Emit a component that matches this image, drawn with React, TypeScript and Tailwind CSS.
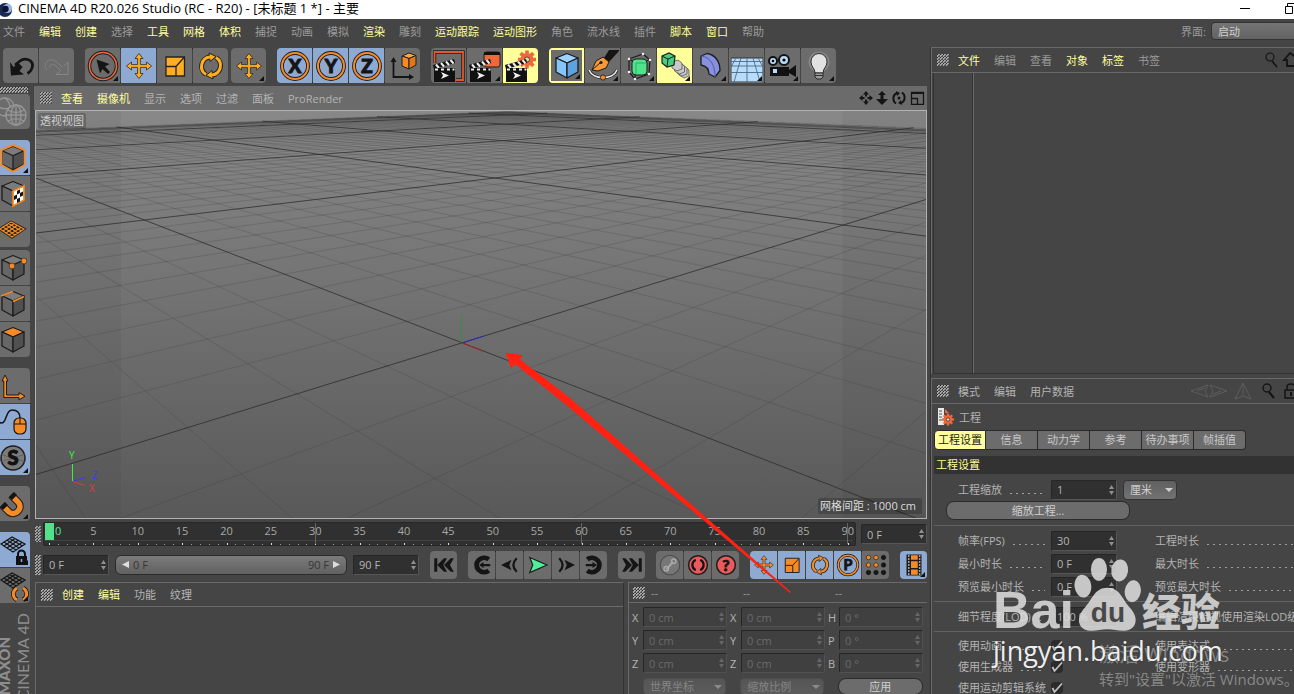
import React from "react";
import clsx from "clsx";

type Item = [label: string, active?: boolean];

const mainMenu: Item[] = [
  ["文件"], ["编辑", true], ["创建", true], ["选择"], ["工具", true], ["网格", true], ["体积", true],
  ["捕捉"], ["动画"], ["模拟"], ["渲染", true], ["雕刻"], ["运动跟踪", true], ["运动图形", true],
  ["角色"], ["流水线"], ["插件"], ["脚本", true], ["窗口", true], ["帮助"],
];
const viewMenu: Item[] = [["查看", true], ["摄像机", true], ["显示"], ["选项"], ["过滤"], ["面板"], ["ProRender"]];
const objectMenu: Item[] = [["文件", true], ["编辑"], ["查看"], ["对象", true], ["标签", true], ["书签"]];
const attrMenu: Item[] = [["模式"], ["编辑"], ["用户数据"]];
const materialMenu: Item[] = [["创建", true], ["编辑", true], ["功能"], ["纹理"]];
const attrTabs = ["工程设置", "信息", "动力学", "参考", "待办事项", "帧插值"];

function Menu({ items, light }: { items: Item[]; light?: boolean }) {
  return (
    <div className="flex gap-[14px] whitespace-nowrap">
      {items.map(([label, active]) => (
        <button key={label} className={active ? "text-[#ffff9b]" : light ? "text-[#b4b4b4]" : "text-[#9b9b9b]"}>
          {label}
        </button>
      ))}
    </div>
  );
}

function Grip({ className = "w-3 h-3" }: { className?: string }) {
  return (
    <span
      className={clsx(
        "block shrink-0 bg-[linear-gradient(135deg,#2c2c2c_30%,#a4a4a4_31%,#a4a4a4_65%,#505050_66%)] bg-size-[3px_3px]",
        className,
      )}
    />
  );
}

type Cell = { name: string; icon: React.ReactNode; tone?: "blue" | "yellow" | "yellowRing"; more?: boolean };

function Group({ cells, size = "lg", vertical }: { cells: Cell[]; size?: "lg" | "sm"; vertical?: boolean }) {
  return (
    <div
      className={clsx(
        "flex shrink-0 gap-px overflow-hidden rounded bg-[#444] outline outline-[#252525] -outline-offset-1",
        vertical && "flex-col",
      )}
    >
      {cells.map((c) => (
        <button
          key={c.name}
          aria-label={c.name}
          className={clsx(
            "relative flex items-center justify-center",
            size === "lg" ? "size-[35px]" : "h-7 w-[27px]",
            c.tone === "blue" ? "bg-[#8ea9d2]" : c.tone === "yellow" ? "bg-[#ffff9b]" : "bg-[#6c6c6c]",
            c.tone === "yellowRing" && "border-2 border-[#ffff9b]",
          )}
        >
          {c.icon}
          {c.more && (
            <svg viewBox="0 0 5 5" className="absolute right-0.5 bottom-0.5 size-[5px]">
              <path d="M5 0v5H0z" fill="#111" />
            </svg>
          )}
        </button>
      ))}
    </div>
  );
}

function Icon({ children, size = "lg" }: { children: React.ReactNode; size?: "lg" | "sm" }) {
  return (
    <svg viewBox="0 0 32 32" className={size === "lg" ? "size-8 shrink-0" : "size-6 shrink-0"}>
      {children}
    </svg>
  );
}

const OR = "#ffae1f";
const DEEP = "#f58a26";

const movePath =
  "M16 3.500l4 5h-2.600v6.100h6.100V12l5 4-5 4v-2.600h-6.100v6.100H20l-4 5-4-5h2.600v-6.100H8.500V20l-5-4 5-4v2.600h6.100V8.500H12z";

const Move = ({ fill = OR, size }: { fill?: string; size?: "lg" | "sm" }) => (
  <Icon size={size}><path d={movePath} fill={fill} stroke="#2a2a2a" strokeWidth=".8" /></Icon>
);

const Scale = ({ fill = OR, size }: { fill?: string; size?: "lg" | "sm" }) => (
  <Icon size={size}>
    <path d="M7 7h18.500v19H7z" fill={fill} stroke="#222" strokeWidth="1.300" />
    <path d="M7 16.500h10V26M17 16.500l8-9" stroke="#222" strokeWidth="1.300" fill="none" />
  </Icon>
);

const Rotate = ({ fill = OR, size }: { fill?: string; size?: "lg" | "sm" }) => (
  <Icon size={size}>
    <g fill="none" stroke="#222" strokeWidth="5">
      <path d="M11 24.500A9.500 9.500 0 0 1 15 7" /><path d="M21 7.500A9.500 9.500 0 0 1 17 25" />
    </g>
    <path d="M14 3l7 3.500-6 5zM18 29l-7-3.500 6-5z" fill={fill} stroke="#222" strokeWidth="1" />
    <g fill="none" stroke={fill} strokeWidth="3">
      <path d="M11 24.500A9.500 9.500 0 0 1 15 7" /><path d="M21 7.500A9.500 9.500 0 0 1 17 25" />
    </g>
  </Icon>
);

const Letter = ({ ch, size }: { ch: string; size?: "lg" | "sm" }) => (
  <Icon size={size}>
    <circle cx="16" cy="16" r="13" fill="none" stroke="#1d1d1d" strokeWidth="3.800" />
    <circle cx="16" cy="16" r="13" fill="none" stroke={DEEP} strokeWidth="2" />
    <text x="16" y="22.500" textAnchor="middle" fontSize="19" fontWeight="900" fill="#151515" stroke="#151515" strokeWidth="1" fontFamily="Lato, sans-serif">{ch}</text>
  </Icon>
);

const Cube = ({ top, left, right, line = "#1d1d1d", children }: { top: string; left: string; right: string; line?: string; children?: React.ReactNode }) => (
  <Icon>
    <g stroke={line} strokeWidth="1.300" strokeLinejoin="round">
      <path d="M16 3.500l11 4.500-11 5L5 8z" fill={top} />
      <path d="M5 8l11 5v15L5 22z" fill={left} />
      <path d="M27 8l-11 5v15l11-6z" fill={right} />
    </g>
    {children}
  </Icon>
);

const Clapper = ({ children }: { children?: React.ReactNode }) => (
  <Icon>
    {children}
    <path d="M0 15l21-6 1.200 4L1 19z" fill="#111" />
    <path d="M3 14.500l3 3.500M8 13l3 3.500M13 11.500l3 3.500M17.500 10l3 3.500" stroke="#eee" strokeWidth="2" />
    <path d="M1 18h21v14H1z" fill="#111" />
    <path d="M2 19.500h3M8 19.500h3M14 19.500h3M19.500 19.500h2" stroke="#eee" strokeWidth="2" />
    <path d="M8 22l8 3.500L8 29l2-3.500z" fill="#eee" />
  </Icon>
);

const Gear = ({ x, y, r, fill, line = "none" }: { x: number; y: number; r: number; fill: string; line?: string }) => (
  <g>
    {[0, 45, 90, 135].map((a) => (
      <rect key={a} x={x - r * 0.2} y={y - r} width={r * 0.4} height={r * 2} fill={fill} stroke={line} transform={`rotate(${a} ${x} ${y})`} />
    ))}
    <circle cx={x} cy={y} r={r * 0.72} fill={fill} />
    <circle cx={x} cy={y} r={r * 0.28} fill="#eadfa0" stroke="#333" strokeWidth=".8" />
  </g>
);

const historyTools: Cell[] = [
  { name: "撤销", icon: <Icon><path d="M10 15l5-4c5-4 13-1 12.500 5-.3 3-2 5.500-5 7.500" fill="none" stroke="#151515" strokeWidth="2.800" /><path d="M5 12l1 13.500 13-1-4.500-3.500 3-4-4-4-5 4z" fill="#151515" /></Icon> },
  { name: "重做", icon: <Icon><path d="M6 20c-5-6 2-13.500 9-8.500l7 6M9 18c-1-4 3-5 6-2l5 5M27 12v12.500H15l4-3M27 12l-4 4" fill="none" stroke="#858585" strokeWidth="1" /></Icon> },
];

const transformTools: Cell[] = [
  { name: "选择", more: true, icon: <Icon><circle cx="16" cy="16" r="13.500" fill="none" stroke="#1d1d1d" strokeWidth="3.500" /><circle cx="16" cy="16" r="13.500" fill="none" stroke="#f0673a" strokeWidth="1.600" /><path d="M9.500 9.500l13 4.500-4.500 2.500 5 5.500-2 2-5.500-5-2.500 4.500z" fill="#151515" /></Icon> },
  { name: "移动", tone: "blue", icon: <Move /> },
  { name: "缩放", icon: <Scale /> },
  { name: "旋转", icon: <Rotate /> },
];

const axisTools: Cell[] = [
  { name: "X", tone: "blue", icon: <Letter ch="X" /> },
  { name: "Y", tone: "blue", icon: <Letter ch="Y" /> },
  { name: "Z", tone: "blue", icon: <Letter ch="Z" /> },
  { name: "坐标系统", icon: (
    <Icon>
      <path d="M6.500 10v17h16" fill="none" stroke="#151515" strokeWidth="1.800" />
      <path d="M6.500 7L9.500 12h-6zM27 27l-5-3v6z" fill="#151515" />
      <path d="M15 6l7-3 7 2.500-7 3z" fill="#ffa74d" stroke="#1d1d1d" /><path d="M15 6l7 2.500V19l-7-3z" fill={DEEP} stroke="#1d1d1d" /><path d="M29 5.500l-7 3V19l7-4z" fill="#e07818" stroke="#1d1d1d" />
    </Icon>
  ) },
];

const renderTools: Cell[] = [
  { name: "渲染活动视图", icon: <Clapper><path d="M1.500 13V2h28.500v28h-7" fill="none" stroke="#1d1d1d" strokeWidth="3.500" /><path d="M1.500 13V2h28.500v28h-7" fill="none" stroke="#e0592e" strokeWidth="1.800" /></Clapper> },
  { name: "渲染到图片查看器", more: true, icon: <Clapper><rect x="15" y="2" width="16" height="15" rx="2.500" fill="#f0673a" stroke="#1d1d1d" /><path d="M15 5V3q0-1 1-1h14q1 0 1 1v2z" fill="#111" /></Clapper> },
  { name: "编辑渲染设置", tone: "yellow", icon: <Clapper><Gear x={22} y={9.500} r={9} fill="#f0673a" /></Clapper> },
];

const createTools: Cell[] = [
  { name: "立方体", tone: "yellowRing", more: true, icon: <Cube top="#9fd3ff" left="#86c5fa" right="#5ea2e0" /> },
  { name: "画笔", more: true, icon: (
    <Icon>
      <path d="M17 8l5-8h10v1l-10 11z" fill="#151515" />
      <path d="M5 20l4-9 7-4 6 5-3 6-8 3z" fill="#f59a35" stroke="#1d1d1d" /><path d="M5 20l8-7" stroke="#1d1d1d" /><circle cx="14" cy="12.500" r="1.600" fill="#1d1d1d" />
      <path d="M2 20c4 10 24 10 28 0" fill="none" stroke="#1d1d1d" strokeWidth="3" /><path d="M2 20c4 10 24 10 28 0" fill="none" stroke="#eee" strokeWidth="1.700" />
      <circle cx="16" cy="27.500" r="2.600" fill={DEEP} stroke="#1d1d1d" strokeWidth=".8" />
    </Icon>
  ) },
  { name: "细分曲面", more: true, icon: (
    <Icon>
      <path d="M6 9l14-5 7 6-1 14-14 5-6-7zM6 9l7 4 14-3M13 13l-1 16" fill="none" stroke="#1d1d1d" strokeWidth="1.200" />
      <rect x="9" y="9" width="15" height="16" rx="4" fill="#4fe38d" stroke="#1d1d1d" /><path d="M13 13h10M13 13v11" stroke="#2fae66" />
      <g fill="#eee"><circle cx="6" cy="9" r="1.300" /><circle cx="20" cy="4" r="1.300" /><circle cx="27" cy="10" r="1.300" /><circle cx="26" cy="24" r="1.300" /><circle cx="12" cy="29" r="1.300" /><circle cx="6" cy="22" r="1.300" /></g>
    </Icon>
  ) },
  { name: "克隆", tone: "yellow", more: true, icon: (
    <Icon>
      <g fill="#c9c9c9" stroke="#555" strokeWidth=".8"><path d="M20 19l6-2 4 3v6l-5 2-5-3z" /><path d="M18 17l6-2 4 3v6l-5 2-5-3z" /><path d="M15.500 15l6-2 4 3v6l-5 2-5-3z" /><path d="M13 12l6-2 4 3v6l-5 2-5-3z" /></g>
      <path d="M3 6l7-3 6 3-1 9-7 2-5-4z" fill="#45d07f" stroke="#1d1d1d" strokeWidth="1.200" /><path d="M3 6l6 3 7-3M9 9l-1 8" stroke="#1d1d1d" fill="none" />
    </Icon>
  ) },
  { name: "扭曲", more: true, icon: <Icon><path d="M6 6l6-2.500c8 1 13 8 13 17L20 27l-6-3c0-6-3-8-8-9z" fill="#8791dd" stroke="#1d1d1d" strokeWidth="1.300" strokeLinejoin="round" /><path d="M6 6c9 1 14 8 14 21" fill="none" stroke="#555cae" /></Icon> },
  { name: "地面", more: true, icon: <Icon><path d="M0 8h32v24H0z" fill="#b9dcfb" stroke="#333" /><path d="M0 11.500h32M0 16h32M0 22.500h32M16 8v24M10 8L3 32M22 8l7 24M5 8l-5 9M27 8l5 9" stroke="#4a6a88" fill="none" strokeWidth=".9" /></Icon> },
  { name: "摄像机", more: true, icon: (
    <Icon>
      <circle cx="6" cy="11" r="4" fill="#b9dcfb" stroke="#111" strokeWidth="2" /><circle cx="17" cy="10" r="5" fill="#b9dcfb" stroke="#111" strokeWidth="2" /><circle cx="6" cy="11" r="1.300" /><circle cx="17" cy="10" r="1.600" />
      <path d="M3 17h19v3l7-5v12l-7-4v3H3z" fill="#111" /><path d="M6 19h4v4H6z" fill="#b9dcfb" />
    </Icon>
  ) },
  { name: "灯光", more: true, icon: (
    <Icon>
      <circle cx="16" cy="12" r="10.500" fill="#858585" /><path d="M16 3.500a8 8 0 0 0-8 8.500c0 5 4 6 4 11h8c0-5 4-6 4-11a8 8 0 0 0-8-8.500z" fill="#e2e2e2" stroke="#222" strokeWidth=".9" />
      <path d="M12 23h8v4l-2 2h-4l-2-2z" fill="#999" stroke="#222" strokeWidth=".9" /><path d="M12 25.500h8" stroke="#333" />
    </Icon>
  ) },
];

const G1 = "#7c7c7c";
const G2 = "#666";
const G3 = "#505050";

const netPaths = "M3 15l11-7 13 7-12 8zM6 13l12 8M9 11l12 8M11.500 9.500l13 7.500M6 17l11-7.500M9 19l11-7.500M12 21l12-7.500";

const paletteGroups: { gap: string; cells: Cell[] }[] = [
  { gap: "", cells: [{ name: "转为可编辑", icon: <Icon><g fill="none" stroke="#969696" strokeWidth="1.300"><circle cx="8" cy="11" r="9" /><path d="M8 2c7 6 6 12 0 17M0 10c7 4 13 3 17-1" /><circle cx="19" cy="19" r="10" fill="#6c6c6c" /><path d="M9 19h20M19 9v20M11 14c5 3 11 3 16 0M11 25c5-3 11-3 16 0" /><ellipse cx="19" cy="19" rx="5" ry="10" /></g></Icon> }] },
  { gap: "mt-[11px]", cells: [
    { name: "模型", tone: "blue", more: true, icon: <Icon><path d="M16 3l11.500 5v15L16 29.500 4.500 23V8z" fill="#1d1d1d" stroke={DEEP} strokeWidth="2" /><path d="M16 5l9.500 3.700L16 13 6.500 8.700z" fill={G1} /><path d="M5.800 9.700l9.600 4.200V27l-9.600-5z" fill={G2} /><path d="M26.200 9.700l-9.600 4.200V27l9.600-5z" fill={G3} /></Icon> },
    { name: "纹理", icon: <Cube top={G1} left={G2} right="#fff"><path d="M16 13l11-5v14l-11 6z" fill="#fff" stroke={DEEP} strokeWidth="1.800" /><path d="M17 18l3-1.400v4l-3 1.500zM23 15l3-1.400v4l-3 1.500zM20 12.800l3-1.300v3.500l-3 1.500zM20 21l3-1.500v4L20 25z" fill="#111" /></Cube> },
    { name: "工作平面", icon: <Icon><path d={netPaths} fill="none" stroke="#1d1d1d" strokeWidth="2.800" /><path d={netPaths} fill="none" stroke={DEEP} strokeWidth="1.200" /></Icon> },
  ] },
  { gap: "mt-[3px]", cells: [
    { name: "点", icon: <Cube top={G1} left={G2} right={G3}><circle cx="15" cy="14" r="2.900" fill={DEEP} stroke="#1d1d1d" strokeWidth=".6" /><circle cx="27" cy="9" r="2.900" fill={DEEP} stroke="#1d1d1d" strokeWidth=".6" /></Cube> },
    { name: "边", icon: <Cube top={G1} left={G2} right={G3}><path d="M4 8l12-4.500M16 13.500l11-5" stroke={DEEP} strokeWidth="1.800" /></Cube> },
    { name: "多边形", icon: <Cube top={DEEP} left={G2} right={G3} /> },
  ] },
  { gap: "mt-[11px]", cells: [
    { name: "启用轴心", icon: <Icon><path d="M8 5L5 11h1.800v16.500H22V30l6-3.800-6-3.700V25H9.500V11H11z" fill={DEEP} stroke="#1d1d1d" strokeWidth="1" /></Icon> },
    { name: "微调", tone: "blue", icon: <Icon><path d="M0 15c11 8 7-11 15-11 6 0 8 3 8 8" fill="none" stroke="#151515" strokeWidth="1.500" /><rect x="17" y="12" width="12" height="16" rx="5" fill={DEEP} stroke="#151515" strokeWidth="1.200" /><path d="M17 18h12M23 12v6" stroke="#151515" /></Icon> },
    { name: "视窗独显", tone: "blue", more: true, icon: <Icon><circle cx="16" cy="16" r="12" fill="#7b7b7b" stroke="#1d1d1d" strokeWidth="1.500" /><path d="M4 12c7 4 16 4 24 0M4 20c7-4 16-4 24 0" fill="none" stroke="#5a5a5a" strokeWidth=".8" /><text x="16" y="23" textAnchor="middle" fontSize="20" fontWeight="900" fill="#111" stroke="#111" fontFamily="Lato, sans-serif">S</text></Icon> },
  ] },
  { gap: "mt-[11px]", cells: [{ name: "启用捕捉", more: true, icon: <Icon><path d="M5 17l7 7c6 5 15-4 9-10l-7-7" fill="none" stroke="#1d1d1d" strokeWidth="7.500" /><path d="M6 18l6 6c6 5 15-4 9-10l-6-6" fill="none" stroke={DEEP} strokeWidth="5.500" /><path d="M3 19l5-5 3 3-5 5zM12 9l5-5 3 3-5 5z" fill="#151515" /></Icon> }] },
  { gap: "mt-[11px]", cells: [
    { name: "锁定工作平面", tone: "blue", more: true, icon: <Icon><g transform="translate(1 -5)"><path d={netPaths} fill="none" stroke="#151515" strokeWidth="1.300" /></g><path d="M21 23v-3a3.500 3.500 0 0 1 7 0v3" fill="none" stroke="#111" strokeWidth="2" /><rect x="19" y="22" width="11" height="9" fill="#111" /><path d="M24.500 25v3" stroke="#8ea9d2" strokeWidth="1.500" /></Icon> },
    { name: "平面工作平面", more: true, icon: <Icon><g transform="translate(1 -5)"><path d={netPaths} fill="none" stroke="#151515" strokeWidth="1.300" /></g><path d="M20 30c-5-3-5-9 0-12M26 18c5 3 5 9 0 12" fill="none" stroke="#151515" strokeWidth="4.500" /><path d="M20 30c-5-3-5-9 0-12M26 18c5 3 5 9 0 12" fill="none" stroke={DEEP} strokeWidth="3" /></Icon> },
  ] },
];

const K = "#151515";
const toStart: Cell[] = [{ name: "转到开始", icon: <Icon size="sm"><path d="M3 7h4v18H3zM7 16l9-9h4l-5 9 5 9h-4zM16 16l9-9h4l-5 9 5 9h-4z" fill={K} /></Icon> }];
const playback: Cell[] = [
  { name: "上一关键帧", icon: <Icon size="sm"><path d="M25 8.500a10 9.500 0 1 0 0 15" fill="none" stroke={K} strokeWidth="6.500" /><path d="M12 16l6-4v2.500h9v3h-9V20z" fill={K} /></Icon> },
  { name: "上一帧", icon: <Icon size="sm"><path d="M4 16l14-7-3 7 3 7z" fill={K} /><path d="M25 7q-9 9 0 18" fill="none" stroke={K} strokeWidth="3" /></Icon> },
  { name: "播放", icon: <Icon size="sm"><path d="M5 6l23 10L5 26l4-10z" fill="#4ff09a" stroke="#1d1d1d" strokeWidth="1.600" /></Icon> },
  { name: "下一帧", icon: <Icon size="sm"><path d="M28 16l-14-7 3 7-3 7z" fill={K} /><path d="M7 7q9 9 0 18" fill="none" stroke={K} strokeWidth="3" /></Icon> },
  { name: "下一关键帧", icon: <Icon size="sm"><path d="M7 8.500a10 9.500 0 1 1 0 15" fill="none" stroke={K} strokeWidth="6.500" /><path d="M20 16l-6-4v2.500H5v3h9V20z" fill={K} /></Icon> },
];
const toEnd: Cell[] = [{ name: "转到结束", icon: <Icon size="sm"><path d="M29 7h-4v18h4zM25 16l-9-9h-4l5 9-5 9h4zM16 16L7 7H3l5 9-5 9h4z" fill={K} /></Icon> }];
const record: Cell[] = [
  { name: "记录活动对象", icon: <Icon size="sm"><circle cx="16" cy="16" r="13" fill="#777" stroke="#4d4d4d" strokeWidth="1.500" /><path d="M11 22l9-10" stroke="#a8a8a8" strokeWidth="2.500" /><circle cx="11" cy="21" r="3" fill="none" stroke="#a8a8a8" strokeWidth="2" /><circle cx="21" cy="11" r="3" fill="none" stroke="#a8a8a8" strokeWidth="2" /></Icon> },
  { name: "自动关键帧", icon: <Icon size="sm"><circle cx="16" cy="16" r="12.500" fill="#ea5a5a" stroke="#1d1d1d" strokeWidth="2" /><path d="M13 9c-6 3-6 11 0 14M19 9c6 3 6 11 0 14" fill="none" stroke={K} strokeWidth="3" /></Icon> },
  { name: "关键帧选集", icon: <Icon size="sm"><circle cx="16" cy="16" r="12.500" fill="#ea5a5a" stroke="#1d1d1d" strokeWidth="2" /><text x="16" y="24" textAnchor="middle" fontSize="21" fontWeight="900" fill={K} stroke={K} fontFamily="Lato, sans-serif">?</text></Icon> },
];
const keyTools: Cell[] = [
  { name: "位置", tone: "blue", icon: <Move fill={DEEP} size="sm" /> },
  { name: "比例", tone: "blue", icon: <Scale fill={DEEP} size="sm" /> },
  { name: "旋转", tone: "blue", icon: <Rotate fill={DEEP} size="sm" /> },
  { name: "参数", tone: "blue", icon: <Letter ch="P" size="sm" /> },
  { name: "点级别动画", icon: (
    <Icon size="sm">
      {[6, 16, 26].map((y) => [6, 16, 26].map((x) => (
        <circle key={`${x}-${y}`} cx={x} cy={y} r="3" fill={x < 20 && y < 20 ? DEEP : K} stroke={K} strokeWidth=".8" />
      )))}
    </Icon>
  ) },
];
const filmTool: Cell[] = [{ name: "时间线", tone: "blue", more: true, icon: <Icon size="sm"><path d="M6 2h20v28H6z" fill="#1d1d1d" /><path d="M12 3h9v6h-9zM12 11h9v9h-9zM12 22h9v7h-9z" fill={DEEP} /><path d="M9 3v26M23.500 3v26" stroke="#ccc" strokeWidth="2" strokeDasharray="2 2" /></Icon> }];

function NumberField({ label, id, value, width = "w-[66px]", dim, hideLabel = true }: { label: string; id?: string; value: string; width?: string; dim?: boolean; hideLabel?: boolean }) {
  return (
    <label className={clsx("flex shrink-0 items-center", !hideLabel && "flex-1")}>
      {!hideLabel && <span className="w-[11px] text-[#b4b4b4]">{label}</span>}
      <span
        className={clsx(
          "flex h-5 items-center rounded-xs border border-t-[#262626] border-l-[#262626] pr-0.5 pl-[5px]",
          dim ? "border-[#515151] bg-[#404040]" : "border-[#565656] bg-[#303030]",
          hideLabel ? width : "flex-1",
        )}
      >
        <input
          id={id}
          aria-label={label}
          defaultValue={value}
          disabled={dim}
          className={clsx("w-0 min-w-0 flex-1 bg-transparent outline-none", dim ? "text-[#6a6a6a]" : "text-[#b4b4b4]")}
        />
        <svg viewBox="0 0 5 10" className="h-[10px] w-[5px]">
          <path d="M0 4l2.500-4L5 4zM0 6l2.500 4L5 6z" fill={dim ? "#666" : "#909090"} />
        </svg>
      </span>
    </label>
  );
}

function Dropdown({ label, value, className, dim }: { label: string; value: string; className?: string; dim?: boolean }) {
  return (
    <span className={clsx("relative flex items-center", className)}>
      <select
        aria-label={label}
        disabled={dim}
        className={clsx(
          "size-full appearance-none rounded-sm border bg-linear-to-b pl-1.5 opacity-100 outline-none",
          dim ? "border-[#4e4e4e] from-[#555] to-[#5c5c5c] text-[#858585]" : "border-[#333] from-[#606060] to-[#727272] text-[#cfcfcf]",
        )}
      >
        <option>{value}</option>
      </select>
      <svg viewBox="0 0 8 4" className="pointer-events-none absolute right-1 h-1 w-2">
        <path d="M0 0h8L4 4z" fill={dim ? "#8a8a8a" : "#d0d0d0"} />
      </svg>
    </span>
  );
}

const Leader = () => (
  <span className="mt-2 ml-1 h-px min-w-0 flex-1 bg-[repeating-linear-gradient(90deg,transparent_0_4px,#a0a0a0_4px_6px)]" />
);

function AttrRow({ left, right, short, children }: { left: string; right?: string; short?: boolean; children: React.ReactNode }) {
  return (
    <div className={clsx("flex items-center whitespace-nowrap", short ? "h-[21px]" : "h-[23px]")}>
      <label htmlFor={left} className="flex w-[87px] shrink-0 items-center">{left}<Leader /></label>
      <span className="ml-[6px] w-[104px] shrink-0">{children}</span>
      {right && <span className="flex min-w-0 flex-1 items-center">{right}<Leader /></span>}
    </div>
  );
}

function Check({ id }: { id: string }) {
  return (
    <span className="grid w-3">
      <input id={id} type="checkbox" defaultChecked className="size-3 appearance-none rounded-sm bg-[#2b2b2b] [grid-area:1/1]" />
      <svg viewBox="0 0 12 12" className="pointer-events-none size-3 [grid-area:1/1]">
        <path d="M1.500 6l2 4L11 1.500" fill="none" stroke="#c0c0c0" strokeWidth="1.800" />
      </svg>
    </span>
  );
}

// ground plane coordinates (1 = ten grid cells) to screen
function project(u: number, v: number) {
  const w = 1 + 0.8948 * u + 0.8131 * v;
  return [(462 - 188.6 * u + 1067 * v) / w, (342.8 + 74.1 * u + 65.1 * v) / w];
}

const EXTENT = 4.5;

function gridLine(c: number, alongU: boolean) {
  const own = alongU ? 0.8131 : 0.8948;
  const other = alongU ? 0.8948 : 0.8131;
  // stop before the line passes behind the camera
  const start = Math.max(-EXTENT, (0.08 - 1 - own * c) / other);
  if (start >= EXTENT) return "";
  const a = alongU ? project(start, c) : project(c, start);
  const b = alongU ? project(EXTENT, c) : project(c, EXTENT);
  return `M${a[0].toFixed(1)} ${a[1].toFixed(1)}L${b[0].toFixed(1)} ${b[1].toFixed(1)}`;
}

const minorLines: string[] = [];
const majorLines: string[] = [];
for (let i = -45; i <= 45; i++) {
  const target = i % 10 === 0 ? majorLines : minorLines;
  target.push(gridLine(i / 10, true), gridLine(i / 10, false));
}

function Viewport() {
  return (
    <div className="relative min-h-0 flex-1 overflow-hidden border border-[#b2b2b2] bg-linear-to-b from-[#888] to-[#595959]">
      <svg viewBox="36 111 890 407" preserveAspectRatio="xMidYMid slice" className="absolute inset-0 size-full">
        <path d={minorLines.join("")} stroke="#303030" strokeOpacity=".2" fill="none" />
        <path d={majorLines.join("")} stroke="#2a2a2a" strokeOpacity=".75" fill="none" />
        <path d="M36 131.500L508 112.500L926 130.500" stroke="#303030" strokeOpacity=".4" strokeWidth="2" fill="none" />
        <path d="M36 111h85v407H36zM842.500 111H926v407h-83.500z" fill="#000" fillOpacity=".04" />
        <path d="M461.500 343v-28" stroke="#1f9a1f" strokeOpacity=".6" />
        <path d="M462 343l22-7" stroke="#2929c4" />
        <path d="M462 343l20 8" stroke="#b52222" />
        <path d="M72.500 481v-17" stroke="#3df03d" /><path d="M72.500 481.500l13-4" stroke="#3a3af0" /><path d="M72.500 481.500l12 4" stroke="#e03a3a" />
        <g fontSize="10" fontFamily="Open Sans, sans-serif">
          <text x="69" y="459" fill="#3df03d">Y</text><text x="92" y="479" fill="#3a3af0">Z</text><text x="89" y="492" fill="#e03a3a">X</text>
        </g>
      </svg>
      <span className="absolute top-0.5 left-0.5 rounded-xs bg-black/20 px-0.5 leading-4 text-[#cfcfcf]">透视视图</span>
      <span className="absolute right-1 bottom-1 rounded-xs bg-black/20 px-1.5 pl-0.5 leading-4 text-[#dcdcdc]">网格间距 : 1000 cm</span>
    </div>
  );
}

function Ruler() {
  const labels = Array.from({ length: 18 }, (_, i) => (i + 1) * 5);
  return (
    <div className="flex h-[30px] items-center">
      <Grip className="ml-px h-4 w-[6px]" />
      <div className="relative ml-[2px] h-6 flex-1 rounded-xs border border-[#272727] bg-[#303030] pr-[7px] pl-[5px]">
        <div className="flex h-[15px] justify-between text-[#a8a8a8]">
          <span className="relative w-0">
            <span className="absolute -left-[4px] h-[17px] w-[9px] bg-[#57e08c]" />
            <span className="absolute left-[6px] text-[#57e08c]">0</span>
          </span>
          {labels.map((n) => (
            <span key={n} className="relative flex w-0 justify-center">
              {n % 30 === 0 && <i className="absolute h-[21px] w-px bg-[#666]" />}
              {n}
            </span>
          ))}
        </div>
        <div className="-mx-[5px] mt-[2px] h-px bg-[#434343]" />
        <div className="mt-[2px] -mr-px flex h-[2px] items-end justify-between">
          {Array.from({ length: 91 }, (_, i) => (
            <i key={i} className={clsx("w-px", i % 5 === 0 ? "h-[2px] bg-[#ddd]" : "h-px bg-[#999]")} />
          ))}
        </div>
      </div>
      <div className="ml-[5px]"><NumberField label="当前帧" value="0 F" /></div>
    </div>
  );
}

function Playback() {
  return (
    <div className="flex h-[31px] items-center">
      <Grip className="ml-px h-5 w-[6px]" />
      <div className="ml-[2px] flex flex-1 items-center">
        <NumberField label="起始帧" value="0 F" />
        <div className="mx-[6px] flex h-5 flex-1 items-center justify-between rounded-md border border-[#2b2b2b] bg-linear-to-b from-[#7b7b7b] to-[#616161] px-1.5 text-[#363636]">
          <span className="flex items-center gap-1"><svg viewBox="0 0 7 7" className="size-[7px]"><path d="M7 0v7L0 3.500z" fill="#ddd" /></svg>0 F</span>
          <span className="flex items-center gap-1">90 F<svg viewBox="0 0 7 7" className="size-[7px]"><path d="M0 0v7l7-3.500z" fill="#ddd" /></svg></span>
        </div>
        <NumberField label="结束帧" value="90 F" />
      </div>
      <div className="ml-[11px] flex gap-[11px]">
        {[toStart, playback, toEnd, record, keyTools, filmTool].map((cells) => (
          <Group key={cells[0].name + cells.length} cells={cells} size="sm" />
        ))}
      </div>
    </div>
  );
}

function Coordinates() {
  return (
    <div className="w-[299px] shrink-0 overflow-hidden border-t border-l border-[#6a6a6a]">
      <div className="flex h-5 items-center border-b border-[#6a6a6a] pl-1 text-[#9b9b9b]">
        <Grip />
        <div className="ml-[6px] flex flex-1"><span className="flex-1">--</span><span className="flex-1">--</span><span className="flex-1">--</span></div>
      </div>
      <div className="mt-1 flex flex-col gap-[3px] pr-1 pl-[3px]">
        {["XXH", "YYP", "ZZB"].map((row) => (
          <div key={row} className="flex gap-[3px]">
            <NumberField label={row[0]} value="0 cm" dim hideLabel={false} />
            <NumberField label={row[1]} value="0 cm" dim hideLabel={false} />
            <NumberField label={row[2]} value="0 °" dim hideLabel={false} />
          </div>
        ))}
      </div>
      <div className="mt-[5px] flex gap-[14px] pr-1 pl-[14px]">
        <Dropdown label="坐标" value="世界坐标" dim className="h-[17px] flex-1" />
        <Dropdown label="比例" value="缩放比例" dim className="h-[17px] flex-1" />
        <button className="h-[17px] flex-1 rounded-lg border border-[#2b2b2b] bg-[#6c6c6c] leading-[15px] text-[#cfcfcf]">应用</button>
      </div>
    </div>
  );
}

function ObjectManager() {
  return (
    <section className="flex h-[327px] shrink-0 flex-col border-t border-l border-[#6a6a6a]">
      <div className="flex h-[25px] shrink-0 items-center overflow-hidden border-b border-[#6a6a6a] pl-[5px]">
        <Grip />
        <div className="ml-[9px]"><Menu items={objectMenu} /></div>
        <svg viewBox="0 0 30 16" className="ml-auto h-4 w-[30px] shrink-0">
          <circle cx="6" cy="5" r="4" fill="none" stroke="#151515" strokeWidth="1.200" /><path d="M8 9l5 6" stroke="#151515" strokeWidth="1.800" />
          <path d="M26 1l-6 7h3v6h10V8h3z" fill="none" stroke="#151515" strokeWidth="1.800" />
        </svg>
      </div>
      <div className="ml-px flex flex-1 border-b border-l border-[#323232]">
        <div className="w-[39px] border-r border-[#323232]" />
        <div className="flex-1 border-l border-[#6a6a6a]" />
      </div>
    </section>
  );
}

function Attributes() {
  return (
    <section className="mt-1 flex min-h-0 flex-1 flex-col overflow-hidden border-t border-l border-[#6a6a6a] text-[#b4b4b4]">
      <div className="flex h-[25px] shrink-0 items-center border-b border-[#6a6a6a] pl-[5px]">
        <Grip />
        <div className="ml-[9px]"><Menu items={attrMenu} light /></div>
        <svg viewBox="0 0 104 18" className="ml-auto h-[18px] w-[104px] shrink-0" fill="none" stroke="#5d5d5d">
          <path d="M1 9l17-6-3 6 3 6zM37 9L20 3l3 6-3 6zM7 9l8-3M31 9l-8 3M53 1l-8 16 8-3 8 3zM53 1v13" />
          <circle cx="77" cy="6" r="4" stroke="#151515" strokeWidth="1.400" /><path d="M79 10l5 6" stroke="#151515" strokeWidth="2.200" />
          <path d="M97 8V5q0-3 4-3t4 3v4" stroke="#151515" strokeWidth="1.500" /><rect x="95" y="8" width="14" height="8" stroke="#151515" strokeWidth="1.500" /><path d="M101 10v4" stroke="#151515" strokeWidth="2" />
        </svg>
      </div>
      <div className="flex h-[26px] shrink-0 items-center gap-[5px] pl-[5px]">
        <svg viewBox="0 0 17 18" className="h-[18px] w-[17px]">
          <path d="M1 0h6v17H1z" fill="#e8e8e8" /><path d="M2 3h3M2 6h3M2 9h3M2 12h3" stroke="#555" /><path d="M8 1l4 4H8z" fill="#f0673a" />
          <Gear x={11} y={11.500} r={6} fill="#f0673a" />
        </svg>
        工程
      </div>
      <div className="ml-[2px] flex shrink-0">
        {attrTabs.map((t, i) => (
          <button
            key={t}
            className={clsx(
              "h-5 w-[52px] border-y border-r border-[#2b2b2b] text-center leading-[18px] whitespace-nowrap first:rounded-l-sm first:border-l last:rounded-r-sm",
              i === 0 ? "bg-[#ffff9b] text-[#222]" : "bg-[#6c6c6c] text-[#c8c8c8]",
            )}
          >
            {t}
          </button>
        ))}
      </div>
      <h2 className="mt-[6px] ml-[2px] h-[18px] shrink-0 bg-[#323232] pl-0.5 leading-[18px] text-[#ffff9b]">工程设置</h2>
      <div className="ml-[2px]">
        <div className="flex flex-col pt-1 pl-6">
          <AttrRow left="工程缩放">
            <span className="flex gap-[6px] overflow-visible">
              <NumberField id="工程缩放" label="工程缩放" value="1" />
              <Dropdown label="单位" value="厘米" className="h-5 w-[54px] shrink-0" />
            </span>
          </AttrRow>
        </div>
        <button className="ml-3 block h-[19px] w-[184px] rounded-lg border border-[#2b2b2b] bg-[#6c6c6c] leading-[17px] text-[#cfcfcf]">缩放工程...</button>
        <div className="mt-[5px] border-t border-[#626262] py-[3px] pl-6">
          <AttrRow left="帧率(FPS)" right="工程时长"><NumberField id="帧率(FPS)" label="帧率" value="30" /></AttrRow>
          <AttrRow left="最小时长" right="最大时长"><NumberField id="最小时长" label="最小时长" value="0 F" /></AttrRow>
          <AttrRow left="预览最小时长" right="预览最大时长"><NumberField id="预览最小时长" label="预览最小时长" value="0 F" /></AttrRow>
        </div>
        <div className="border-t border-[#626262] py-[3px] pl-6">
          <AttrRow left="细节程度(LOD)" right="编辑渲染检视使用渲染LOD级别"><NumberField id="细节程度(LOD)" label="细节程度" value="100 %" /></AttrRow>
        </div>
        <div className="border-t border-[#626262] py-[3px] pl-6">
          <AttrRow short left="使用动画" right="使用表达式"><Check id="使用动画" /></AttrRow>
          <AttrRow short left="使用生成器" right="使用变形器"><Check id="使用生成器" /></AttrRow>
          <AttrRow short left="使用运动剪辑系统"><Check id="使用运动剪辑系统" /></AttrRow>
        </div>
      </div>
    </section>
  );
}

function Watermarks() {
  return (
    <>
      <div className="pointer-events-none absolute right-0 bottom-[3px] w-[195px] whitespace-nowrap text-[#9a9a9a]/80">
        <p className="text-[20px] leading-6">激活 Windows</p>
        <p className="text-[15px] leading-6">转到"设置"以激活 Windows。</p>
      </div>
      <div className="pointer-events-none absolute right-[69px] bottom-[25px] w-[232px] text-[#e0e0e0]/85">
        <div className="flex items-end">
          <span className="font-['Liberation_Sans'] text-[52px] leading-[46px] font-bold">Bai</span>
          <span className="relative h-[77px] w-[68px] shrink-0">
            <svg viewBox="445 90 200 230" className="h-[77px] w-[68px]" fill="currentColor">
              <ellipse cx="518" cy="130" rx="24" ry="34" /><ellipse cx="580" cy="133" rx="25" ry="33" transform="rotate(8 580 133)" />
              <ellipse cx="470" cy="180" rx="25" ry="34" transform="rotate(-8 470 180)" /><ellipse cx="619" cy="195" rx="24" ry="33" transform="rotate(8 619 195)" />
              <path d="M543 185c38 0 44 34 66 58 32 33 20 68-14 70-20 1-32-4-52-4s-32 5-52 4c-34-2-46-37-14-70 22-24 28-58 66-58z" />
            </svg>
            <span className="absolute inset-x-0 bottom-1 text-center font-['Liberation_Sans'] text-[28px] leading-8 font-bold text-[#484848]">du</span>
          </span>
          <span className="text-[39px] leading-[44px] font-black whitespace-nowrap">经验</span>
        </div>
        <p className="text-[27px] leading-9 font-normal text-[#eee] [text-shadow:0_0_2px_#333]">jingyan.baidu.com</p>
      </div>
    </>
  );
}

export default function App() {
  return (
    <div className="relative flex h-screen flex-col overflow-hidden bg-[#454545] font-['Open_Sans','Noto_Sans_CJK_SC',sans-serif] text-[11px] leading-[15px]">
      <header className="flex h-[19px] shrink-0 items-center bg-white text-[13px] leading-4 text-black">
        <svg viewBox="0 0 13 14" className="h-[14px] w-[13px]">
          <circle cx="5" cy="7" r="7" fill="#1a2a55" /><circle cx="7.500" cy="5.500" r="4.500" fill="#9db4e6" /><circle cx="5.500" cy="6" r="3.200" fill="#0c1430" />
        </svg>
        <h1 className="mb-1 ml-[5px]">CINEMA 4D R20.026 Studio (RC - R20) - [未标题 1 *] - 主要</h1>
        <svg viewBox="0 0 56 12" className="mb-1 ml-auto h-3 w-14" fill="none" stroke="#000"><path d="M2 6.500h10M47.500 4.500h7v7h-7zM49.500 4.500v-3h7" /></svg>
      </header>

      <nav className="mb-1 flex h-6 shrink-0 items-center pl-[3px]">
        <Menu items={mainMenu} />
        <label className="ml-auto flex items-center gap-[5px] text-[#9b9b9b]">
          界面:
          <select className="-mr-1 h-[18px] w-[87px] appearance-none rounded-sm border border-[#333] bg-linear-to-b from-[#757575] to-[#626262] pl-1.5 text-[#cfcfcf]">
            <option>启动</option>
          </select>
        </label>
      </nav>

      <main className="flex min-h-0 flex-1">
        <div className="flex min-w-0 flex-1 flex-col">
          <div className="flex h-[39px] shrink-0 items-start pt-px pl-[3px]">
            <Group cells={historyTools} />
            <div className="ml-[11px] flex gap-[3px]">
              <Group cells={transformTools} />
              <Group cells={[{ name: "最近使用", more: true, icon: <Move /> }]} />
            </div>
            <div className="ml-[11px] flex gap-[11px]">
              <Group cells={axisTools} />
              <Group cells={renderTools} />
              <Group cells={createTools} />
            </div>
          </div>

          <div className="flex min-h-0 flex-1">
            <aside className="flex w-[34px] shrink-0 flex-col overflow-hidden">
              <Grip className="mt-px mb-[1px] h-[6px] w-7" />
              <div className="-ml-[5px] flex w-[35px] flex-col">
                {paletteGroups.map((g) => (
                  <div key={g.cells[0].name} className={g.gap}><Group cells={g.cells} vertical /></div>
                ))}
              </div>
              <div className="mt-[10px] -ml-1 flex items-start leading-4 text-[#8e8e8e]">
                <b className="mt-6 rotate-180 font-['Lato'] text-[15px] font-black [writing-mode:vertical-rl]">MAXON</b>
                <span className="ml-[3px] rotate-180 font-['Lato'] text-[16px] [writing-mode:vertical-rl]">CINEMA 4D</span>
              </div>
            </aside>

            <div className="mr-[3px] flex min-w-0 flex-1 flex-col">
              <div className="flex h-6 shrink-0 items-center bg-[#6b6b6b] pl-[6px]">
                <Grip />
                <div className="ml-[9px]"><Menu items={viewMenu} light /></div>
                <svg viewBox="0 0 66 14" className="mr-[2px] ml-auto h-[14px] w-[66px]" fill="#151515">
                  <path d="M7 0l3 3.500H8v2H6v-2H4zM7 14l3-3.500H8v-2H6v2H4zM0 7l3.500-3v2h2v2h-2v2zM14 7l-3.500-3v2h-2v2h2v2zM23 0l4 4h-2.500v4H29l-6 6-6-6h4.500V4H19z" />
                  <path d="M37 12.500A6 6 0 0 1 38 2M43 1.500A6 6 0 0 1 42 12" fill="none" stroke="#151515" strokeWidth="2" /><path d="M37 0l4 2-3 3zM43 14l-4-2 3-3z" /><circle cx="40" cy="7" r="1.500" />
                  <path d="M52.500 1.500h12v12h-12zM52.500 7.500h6v6" fill="none" stroke="#151515" strokeWidth="1.300" /><path d="M52 1h13v2H52z" />
                </svg>
              </div>
              <div className="ml-px flex min-h-0 flex-1 flex-col"><Viewport /></div>
              <div className="shrink-0"><Ruler /><Playback /></div>
              <div className="mt-[2px] ml-px flex h-[112px] shrink-0 gap-1">
                <div className="flex-1 border-t border-r border-l border-[#6a6a6a] border-r-[#333]">
                  <div className="flex h-6 items-center border-b border-[#6a6a6a] pl-[5px]">
                    <Grip />
                    <div className="ml-[9px]"><Menu items={materialMenu} light /></div>
                  </div>
                </div>
                <Coordinates />
              </div>
            </div>
          </div>
        </div>

        <div className="flex w-[364px] shrink-0 flex-col overflow-hidden border-l border-[#333]">
          <ObjectManager />
          <Attributes />
        </div>
      </main>

      <svg viewBox="500 346 300 254" className="pointer-events-none absolute top-[346px] left-[500px] h-[254px] w-[300px]">
        <path d="M505.700 352.700l17.600 2.500-3.500 4L570 398 791 592l-1 1-225-189-50-40-4 4.500z" fill="#ff2112" />
      </svg>
      <Watermarks />
    </div>
  );
}
